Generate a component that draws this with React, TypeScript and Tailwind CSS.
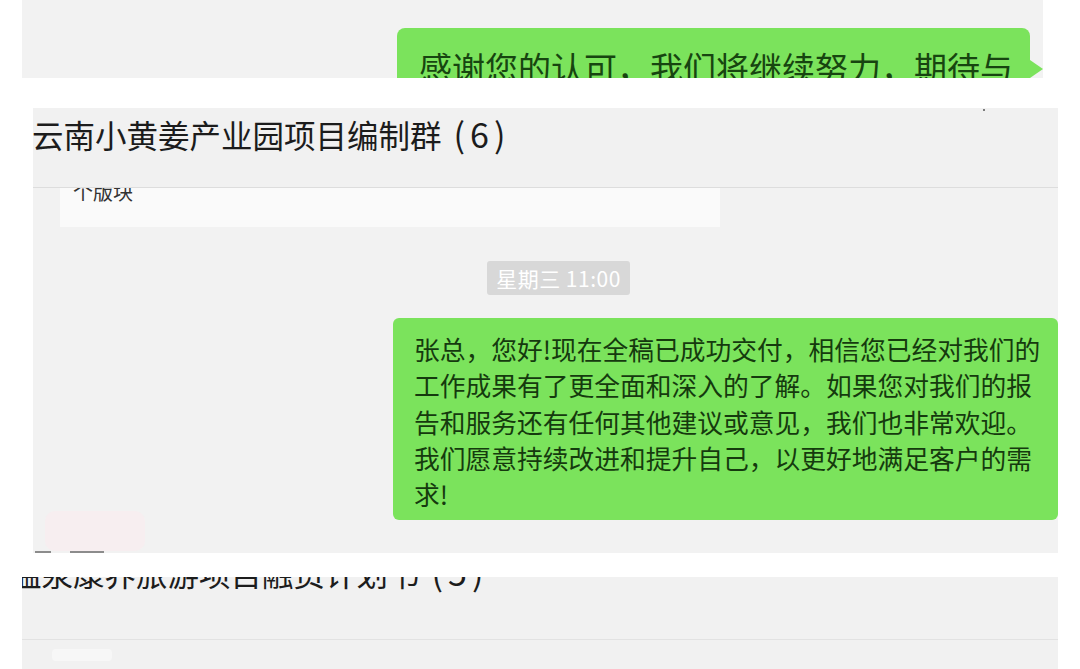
const cjk = { fontFamily: '"Noto Sans CJK SC", "Noto Sans", sans-serif' };

function TopStrip() {
  return (
    <div className="ml-[22px] w-[1021px] h-[78px] shrink-0 overflow-hidden bg-[#f2f2f2]">
      <div className="pt-[28px] pl-[375px]">
        <div className="relative w-[633px] h-[80px] rounded-[8px] bg-[#7be35c] pl-[22px] pt-[17px]">
          <p className="text-[33px] leading-[44px] text-[#174510] whitespace-nowrap">
            感谢您的认可，我们将继续努力，期待与
          </p>
          <span className="absolute right-[-13px] top-[32px] w-0 h-0 border-y-[9px] border-y-transparent border-l-[13px] border-l-[#7be35c]" />
        </div>
      </div>
    </div>
  );
}

function GroupChat() {
  const lines = [
    '张总，您好!现在全稿已成功交付，相信您已经对我们的',
    '工作成果有了更全面和深入的了解。如果您对我们的报',
    '告和服务还有任何其他建议或意见，我们也非常欢迎。',
    '我们愿意持续改进和提升自己，以更好地满足客户的需',
    '求!',
  ];
  return (
    <div className="relative ml-[33px] w-[1025px] h-[445px] shrink-0 overflow-hidden bg-[#f2f2f2]">
      {/* header */}
      <div className="h-[80px] pt-[6px] border-b border-[#dddddd] bg-[#f1f1f1]">
        <h1 className="-ml-[1px] text-[31.5px] leading-[40px] text-[#1c1c1c] whitespace-nowrap">
          云南小黄姜产业园项目编制群
          <span className="ml-[12px] text-[34px] tracking-[5px]">(6)</span>
        </h1>
        <span className="absolute left-[950px] top-[1px] w-[2px] h-[2px] rounded-full bg-[#555]" />
      </div>

      {/* messages */}
      <div className="flex flex-col">
        <div className="ml-[27px] w-[660px] h-[39px] overflow-hidden bg-[#fafafa]">
          <p className="-mt-[12px] pl-[13px] text-[20px] leading-[32px] text-[#333]">个版块</p>
        </div>

        <div className="mt-[34px] ml-[454px] w-[143px] rounded-[3px] bg-[#d8d8d8] py-[3px] text-center text-[21px] leading-[28px] tracking-[0.5px] text-white whitespace-nowrap">
          星期三 11:00
        </div>

        <div className="mt-[23px] ml-[360px] w-[665px] h-[202px] rounded-[6px] bg-[#7be35c] pl-[21px] pt-[13px]">
          {lines.map((l) => (
            <p key={l} className="text-[25.75px] leading-[36.3px] text-[#153a0e] whitespace-nowrap">
              {l}
            </p>
          ))}
        </div>
      </div>

      {/* faint leftovers at the bottom edge */}
      <div className="absolute left-[12px] bottom-[2px] w-[100px] h-[40px] rounded-[10px] bg-[#f7eef0]" />
      <div className="absolute left-[2px] bottom-0 w-[16px] h-[2px] bg-[#8c8c8c]" />
      <div className="absolute left-[37px] bottom-0 w-[34px] h-[2px] bg-[#8c8c8c]" />
    </div>
  );
}

function BottomStrip() {
  return (
    <div className="ml-[22px] w-[1036px] h-[92px] shrink-0 overflow-hidden bg-[#f1f1f1] flex flex-col">
      <div className="h-[63px] border-b border-[#e2e2e2]">
        <p className="-mt-[25px] -ml-[12px] text-[31.5px] leading-[40px] text-[#1c1c1c] whitespace-nowrap">
          温泉康养旅游项目融资计划书
          <span className="ml-[12px] text-[34px] tracking-[5px]">(5)</span>
        </p>
      </div>
      <div className="flex-1 flex items-center pl-[30px]">
        <div className="w-[60px] h-[12px] rounded bg-[#f7f7f7]" />
      </div>
    </div>
  );
}

export default function App() {
  return (
    <div className="w-[1080px] h-[669px] overflow-hidden bg-white flex flex-col" style={cjk}>
      <TopStrip />
      <div className="h-[30px] shrink-0" />
      <GroupChat />
      <div className="h-[24px] shrink-0" />
      <BottomStrip />
    </div>
  );
}
